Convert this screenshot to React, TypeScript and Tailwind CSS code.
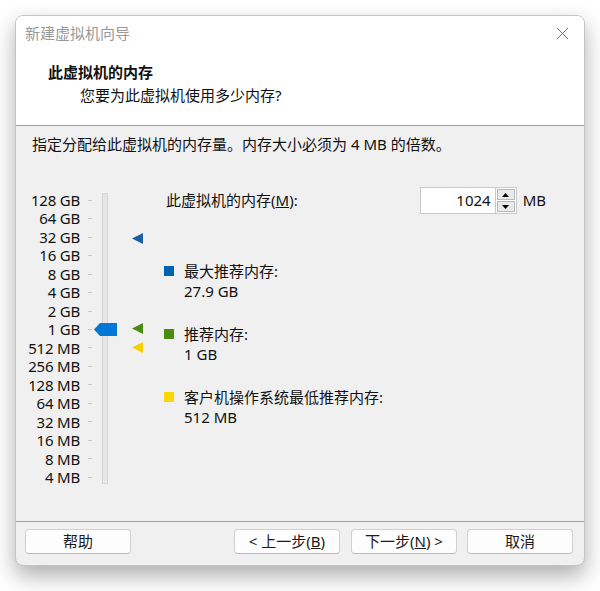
import React from "react";

const FONT = { fontFamily: '"Noto Sans", "Noto Sans CJK SC", sans-serif' };

const sizes = [
  "128 GB", "64 GB", "32 GB", "16 GB", "8 GB", "4 GB", "2 GB", "1 GB",
  "512 MB", "256 MB", "128 MB", "64 MB", "32 MB", "16 MB", "8 MB", "4 MB",
];

function Triangle({ color, top }: { color: string; top: number }) {
  return (
    <div
      className="absolute left-[116px] w-[11px] h-[11px]"
      style={{ top, background: color, clipPath: "polygon(0 50%, 100% 0, 100% 100%)" }}
    />
  );
}

function Legend({ color, label, value }: { color: string; label: string; value: string }) {
  return (
    <div className="flex flex-col">
      <div className="flex items-center h-[20px]">
        <div className={`w-[10px] h-[10px] ${color}`} />
        <span className="ml-[10px]">{label}</span>
      </div>
      <div className="h-[20px] leading-[20px] pl-[20px]">{value}</div>
    </div>
  );
}

function Btn({ children, className = "" }: { children: React.ReactNode; className?: string }) {
  return (
    <button
      className={`h-[25px] w-[106px] rounded-[4px] border border-[#d0d0d0] border-b-[#bcbcbc] bg-[#fdfdfd] text-[15px] text-[#1a1a1a] flex items-center justify-center ${className}`}
    >
      {children}
    </button>
  );
}

export default function App() {
  return (
    <div className="w-[600px] h-[591px] bg-white pt-[15px] pl-[15px]" style={FONT}>
      <div className="w-[570px] h-[551px] rounded-[8px] border border-[#c4c4c4] bg-[#f0f0f0] shadow-[0_10px_22px_rgba(0,0,0,0.32)] flex flex-col overflow-hidden text-[15px] text-[#111]">
        {/* header */}
        <div className="bg-white h-[110px] flex flex-col border-b border-[#a0a0a0]">
          <div className="h-[34px] flex items-center justify-between pl-[9px] pr-[15px]">
            <span className="text-[#999]">新建虚拟机向导</span>
            <svg width="13" height="13" viewBox="0 0 13 13">
              <path d="M1 1 L12 12 M12 1 L1 12" stroke="#707070" strokeWidth="1" />
            </svg>
          </div>
          <div className="pl-[32px] mt-[11px] h-[22px] leading-[22px] font-bold">此虚拟机的内存</div>
          <div className="pl-[64px] mt-[1px] h-[22px] leading-[22px]">您要为此虚拟机使用多少内存?</div>
        </div>

        {/* body */}
        <div className="flex-1 flex flex-col">
          <div className="pl-[16px] pt-[9px] h-[28px] leading-[19px]">
            指定分配给此虚拟机的内存量。内存大小必须为 4 MB 的倍数。
          </div>
          <div className="flex mt-[37px]">
            <div className="relative w-[148px] pl-[10px] flex">
              <div className="w-[54px] flex flex-col items-end text-[#111]">
                {sizes.map((s) => (
                  <div key={s} className="h-[18.47px] leading-[18.47px] whitespace-nowrap tracking-[-0.2px]">{s}</div>
                ))}
              </div>
              <div className="ml-[8px] w-[4px] flex flex-col">
                {sizes.map((s) => (
                  <div key={s} className="h-[18.47px] flex items-center">
                    <div className="w-[4px] h-[1px] bg-[#c8c8c8]" />
                  </div>
                ))}
              </div>
              <div className="ml-[10px] mt-[2px] w-[6px] h-[291px] bg-[#e6e6e6] border border-[#d6d6d6]" />
              <div
                className="absolute left-[78px] top-[132px] w-[23px] h-[13px] bg-[#0078d7]"
                style={{ clipPath: "polygon(0 50%, 6px 0, 100% 0, 100% 100%, 6px 100%)" }}
              />
              <Triangle color="#1a5fa6" top={42} />
              <Triangle color="#4a8c12" top={132} />
              <Triangle color="#f5d000" top={151} />
            </div>

            <div className="flex-1 flex flex-col -mt-[4px] pr-[38px]">
              <div className="h-[27px] flex items-center">
                <span className="ml-[2px]">
                  此虚拟机的内存(<span className="underline">M</span>):
                </span>
                <div className="ml-auto flex h-[27px]">
                  <div className="w-[76px] h-[27px] bg-white border border-[#c9c9c9] flex items-center justify-end pr-[4px]">
                    1024
                  </div>
                  <div className="w-[21px] h-[27px] flex flex-col border border-l-0 border-[#c9c9c9] bg-white p-[1px] gap-[1px]">
                    <div className="flex-1 bg-[#e9e9e9] border border-[#b8b8b8] flex items-center justify-center">
                      <svg width="7" height="4" viewBox="0 0 7 4"><path d="M0 4 L3.5 0 L7 4 Z" fill="#000" /></svg>
                    </div>
                    <div className="flex-1 bg-[#e9e9e9] border border-[#b8b8b8] flex items-center justify-center">
                      <svg width="7" height="4" viewBox="0 0 7 4"><path d="M0 0 L3.5 4 L7 0 Z" fill="#000" /></svg>
                    </div>
                  </div>
                  <span className="ml-[6px] leading-[27px]">MB</span>
                </div>
              </div>
              <div className="mt-[47px] flex flex-col gap-[23px]">
                <Legend color="bg-[#0063b1]" label="最大推荐内存:" value="27.9 GB" />
                <Legend color="bg-[#4a8c0e]" label="推荐内存:" value="1 GB" />
                <Legend color="bg-[#ffd700]" label="客户机操作系统最低推荐内存:" value="512 MB" />
              </div>
            </div>
          </div>
        </div>

        {/* footer */}
        <div className="h-[44px] border-t border-[#a0a0a0] flex items-start pt-[7px] pl-[9px] pr-[11px]">
          <Btn>帮助</Btn>
          <Btn className="ml-auto">
            &lt; 上一步(<span className="underline">B</span>)
          </Btn>
          <Btn className="ml-[11px]">
            下一步(<span className="underline">N</span>) &gt;
          </Btn>
          <Btn className="ml-[10px]">取消</Btn>
        </div>
      </div>
    </div>
  );
}
